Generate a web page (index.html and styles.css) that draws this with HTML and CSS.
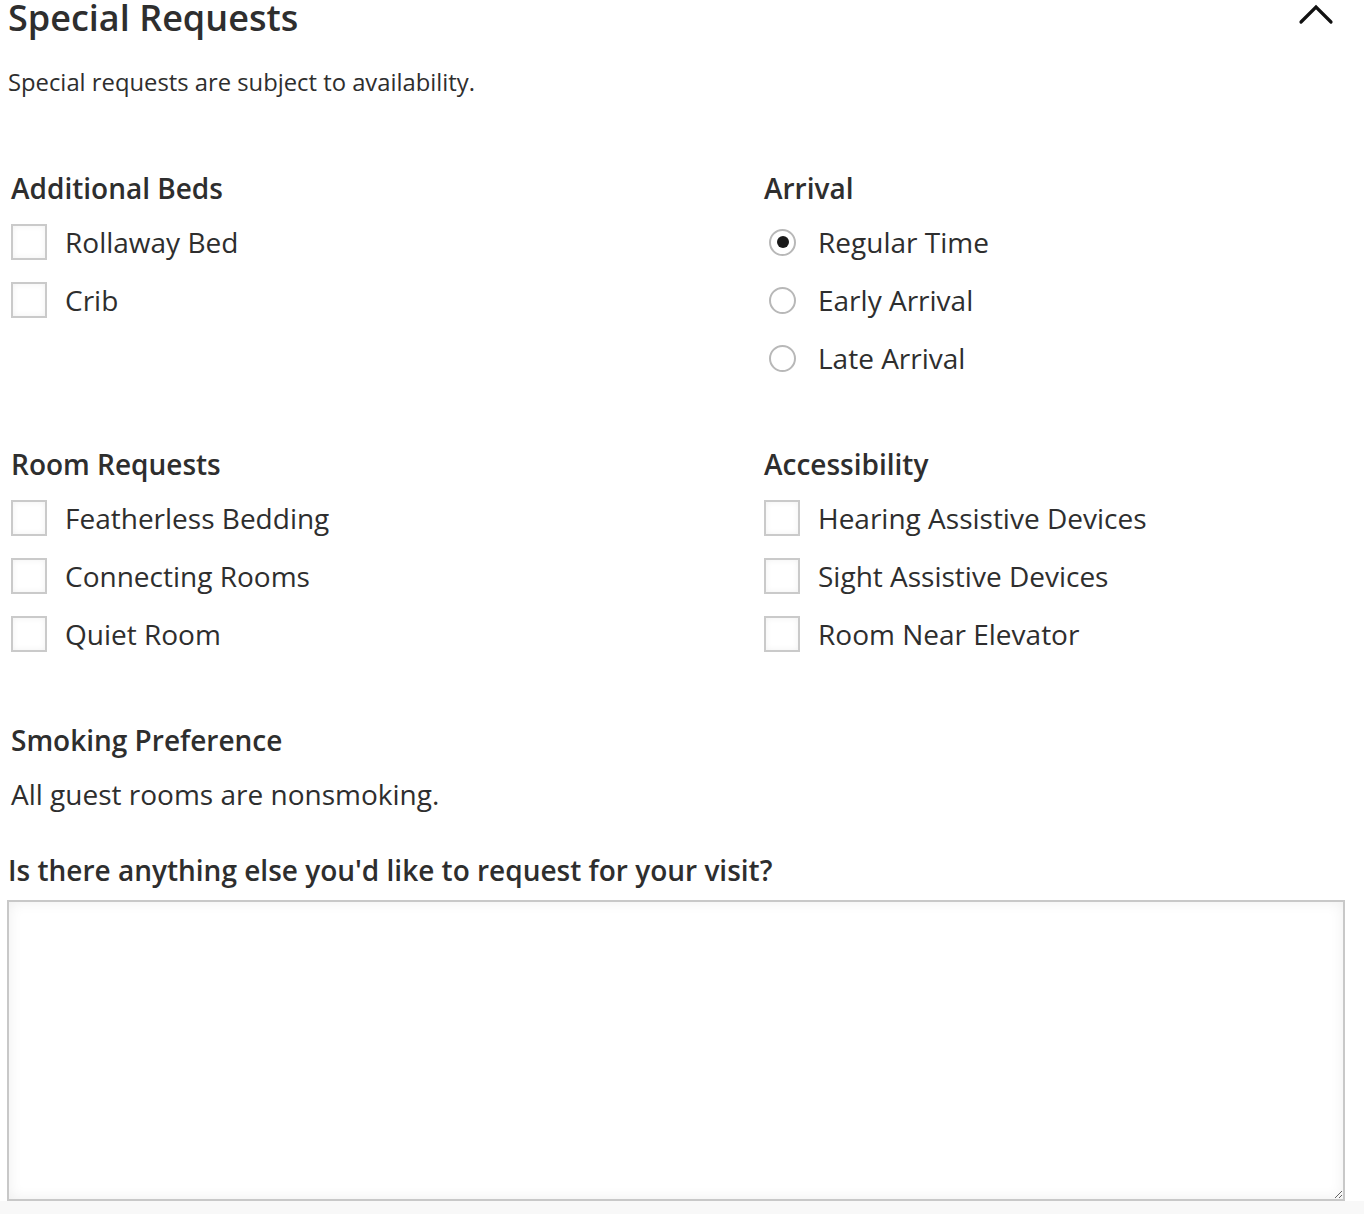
FILE: index.html
```html
<!DOCTYPE html>
<html lang="en">
<head>
<meta charset="utf-8">
<title>Special Requests</title>
<link rel="stylesheet" href="styles.css">
</head>
<body>
<div class="page">
  <div class="header">
    <h1 class="title">Special Requests</h1>
    <svg class="chevron" width="36" height="24" viewBox="0 0 36 24"><polyline points="3,20 18,5 33,20" fill="none" stroke="#111" stroke-width="3.2" stroke-linecap="round" stroke-linejoin="miter"/></svg>
  </div>
  <p class="subtitle">Special requests are subject to availability.</p>

  <div class="grid">
    <div class="group">
      <h2 class="heading">Additional Beds</h2>
      <div class="options">
        <label class="option"><input type="checkbox" class="check"><span>Rollaway Bed</span></label>
        <label class="option"><input type="checkbox" class="check"><span>Crib</span></label>
      </div>
    </div>
    <div class="group">
      <h2 class="heading">Arrival</h2>
      <div class="options">
        <label class="option"><input type="radio" name="arrival" class="radio" checked><span>Regular Time</span></label>
        <label class="option"><input type="radio" name="arrival" class="radio"><span>Early Arrival</span></label>
        <label class="option"><input type="radio" name="arrival" class="radio"><span>Late Arrival</span></label>
      </div>
    </div>
    <div class="group">
      <h2 class="heading">Room Requests</h2>
      <div class="options">
        <label class="option"><input type="checkbox" class="check"><span>Featherless Bedding</span></label>
        <label class="option"><input type="checkbox" class="check"><span>Connecting Rooms</span></label>
        <label class="option"><input type="checkbox" class="check"><span>Quiet Room</span></label>
      </div>
    </div>
    <div class="group">
      <h2 class="heading">Accessibility</h2>
      <div class="options">
        <label class="option"><input type="checkbox" class="check"><span>Hearing Assistive Devices</span></label>
        <label class="option"><input type="checkbox" class="check"><span>Sight Assistive Devices</span></label>
        <label class="option"><input type="checkbox" class="check"><span>Room Near Elevator</span></label>
      </div>
    </div>
  </div>

  <div class="smoking">
    <h2 class="heading">Smoking Preference</h2>
    <p class="note">All guest rooms are nonsmoking.</p>
  </div>

  <label class="question" for="req">Is there anything else you'd like to request for your visit?</label>
  <textarea id="req" class="textarea"></textarea>
</div>
<div class="footer-strip"></div>
</body>
</html>
```
FILE: styles.css
```css
html, body {
  margin: 0;
  padding: 0;
  background: #ffffff;
}
body {
  font-family: "Open Sans", "Liberation Sans", sans-serif;
  color: #2e2e2e;
}
.page {
  padding: 0 19px 0 7px;
}
.header {
  display: flex;
  justify-content: space-between;
  align-items: flex-start;
  height: 44px;
}
.title {
  margin: -4px 0 0 1px;
  font-size: 36px;
  font-weight: 600;
  line-height: 44px;
}
.chevron {
  margin-top: 2px;
  margin-right: 11px;
}
.subtitle {
  margin: 23px 0 0 1px;
  font-size: 23.8px;
  line-height: 30px;
}
.grid {
  display: grid;
  grid-template-columns: 753px 1fr;
  row-gap: 70px;
  margin-top: 73px;
  padding-left: 4px;
}
.heading {
  margin: 0;
  font-size: 28px;
  font-weight: 600;
  line-height: 36px;
}
.options {
  display: flex;
  flex-direction: column;
  gap: 22px;
  margin-top: 18px;
}
.option {
  display: flex;
  align-items: center;
  height: 36px;
  font-size: 28px;
}
.check {
  appearance: none;
  -webkit-appearance: none;
  margin: 0 18px 0 0;
  width: 36px;
  height: 36px;
  box-sizing: border-box;
  border: 2px solid #cacaca;
  background: #fff;
  box-shadow: inset 0 0 6px rgba(0, 0, 0, 0.06);
  flex: none;
}
.radio {
  appearance: none;
  -webkit-appearance: none;
  margin: 0 22px 0 5px;
  width: 27px;
  height: 27px;
  box-sizing: border-box;
  border: 2px solid #b8b8b8;
  border-radius: 50%;
  background: #fff;
  flex: none;
  display: grid;
  place-items: center;
}
.radio:checked::after {
  content: "";
  width: 12px;
  height: 12px;
  border-radius: 50%;
  background: #1a1a1a;
}
.smoking {
  margin-top: 70px;
  padding-left: 4px;
}
.note {
  margin: 18px 0 0;
  font-size: 28px;
  line-height: 36px;
}
.question {
  display: block;
  margin: 40px 0 0 1px;
  font-size: 28px;
  font-weight: 600;
  line-height: 36px;
}
.textarea {
  display: block;
  margin-top: 12px;
  width: 1338px;
  height: 301px;
  box-sizing: border-box;
  border: 2px solid #c8c8c8;
  box-shadow: inset 0 0 14px rgba(0, 0, 0, 0.07);
  background: #fff;
  resize: both;
  font-family: inherit;
  font-size: 22px;
}
.footer-strip {
  height: 40px;
  background: #f8f8f8;
}
```
